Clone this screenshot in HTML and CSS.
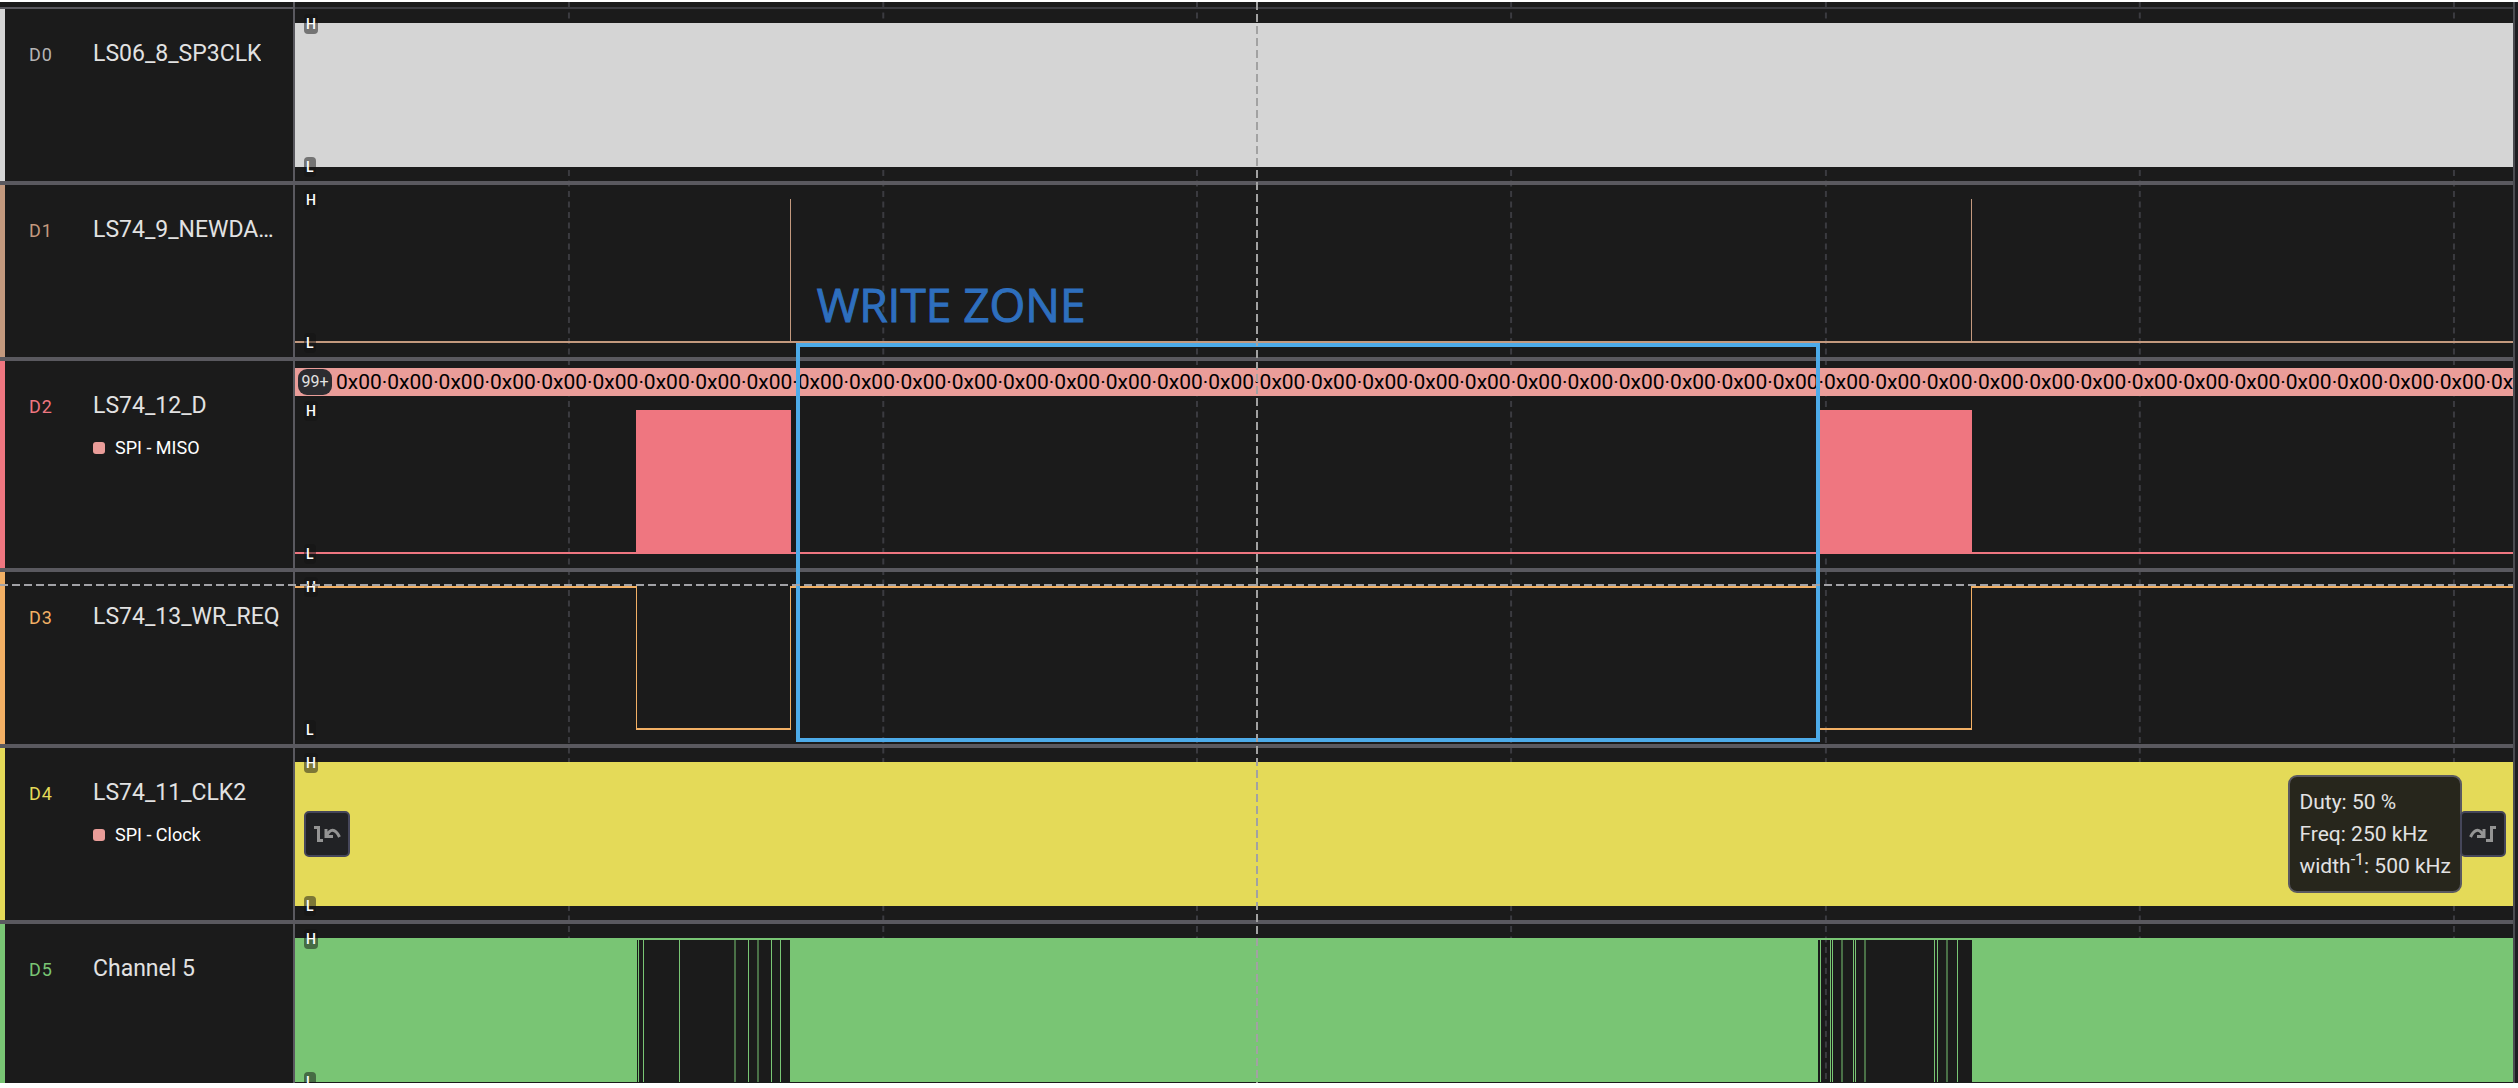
FILE: index.html
```
<!DOCTYPE html>
<html lang="en">
<head>
    <meta charset="utf-8">
    <title>Logic Analyzer</title>
    <link rel="stylesheet" href="styles.css">
</head>
<body>
<main class="analyzer">
    <!-- time grid, sits behind the channels -->
    <svg class="grid" aria-hidden="true">
        <line x1="12.34%" x2="12.34%" y1="0" y2="100%"/>
        <line x1="26.5%" x2="26.5%" y1="0" y2="100%"/>
        <line x1="40.63%" x2="40.63%" y1="0" y2="100%"/>
        <line x1="54.78%" x2="54.78%" y1="0" y2="100%"/>
        <line x1="68.96%" x2="68.96%" y1="0" y2="100%"/>
        <line x1="83.1%" x2="83.1%" y1="0" y2="100%"/>
        <line x1="97.25%" x2="97.25%" y1="0" y2="100%"/>
    </svg>

    <div class="ruler"><div class="ruler-side"></div></div>

    <section class="channel d0">
        <div class="label">
            <span class="id">D0</span>
            <span class="name">LS06_8_SP3CLK</span>
        </div>
        <div class="lane">
            <div class="signal">
                <svg class="wave" viewBox="0 0 2220 144" preserveAspectRatio="none">
                    <rect x="0" y="0" width="2220" height="144"/>
                </svg>
                <div class="levels"><span>H</span><span>L</span></div>
            </div>
        </div>
    </section>

    <section class="channel d1">
        <div class="label">
            <span class="id">D1</span>
            <span class="name">LS74_9_NEWDA…</span>
        </div>
        <div class="lane">
            <div class="signal">
                <svg class="wave" viewBox="0 0 2220 144" preserveAspectRatio="none">
                    <rect x="0" y="142" width="2220" height="2"/>
                    <rect x="495" y="0" width="1" height="142"/>
                    <rect x="1676" y="0" width="1" height="142"/>
                </svg>
                <div class="levels"><span>H</span><span>L</span></div>
            </div>
        </div>
    </section>

    <section class="channel d2">
        <div class="label">
            <span class="id">D2</span>
            <div class="names">
                <span class="name">LS74_12_D</span>
                <span class="decoder">SPI - MISO</span>
            </div>
        </div>
        <div class="lane">
            <div class="frames">
                <span class="count">99+</span>
                <span class="bytes">0x00·0x00·0x00·0x00·0x00·0x00·0x00·0x00·0x00·0x00·0x00·0x00·0x00·0x00·0x00·0x00·0x00·0x00·0x00·0x00·0x00·0x00·0x00·0x00·0x00·0x00·0x00·0x00·0x00·0x00·0x00·0x00·0x00·0x00·0x00·0x00·0x00·0x00·0x00·0x00·0x00·0x00·0x</span>
            </div>
            <div class="signal">
                <svg class="wave" viewBox="0 0 2220 144" preserveAspectRatio="none">
                    <rect x="0" y="142" width="2220" height="2"/>
                    <rect x="341" y="0" width="155" height="144"/>
                    <rect x="1523" y="0" width="154" height="144"/>
                </svg>
                <div class="levels"><span>H</span><span>L</span></div>
            </div>
        </div>
    </section>

    <section class="channel d3">
        <div class="label">
            <span class="id">D3</span>
            <span class="name">LS74_13_WR_REQ</span>
        </div>
        <div class="lane">
            <div class="signal">
                <svg class="wave" viewBox="0 0 2220 144" preserveAspectRatio="none">
                    <rect x="0" y="0" width="342" height="2"/>
                    <rect x="341" y="0" width="1" height="144"/>
                    <rect x="341" y="142" width="155" height="2"/>
                    <rect x="495" y="0" width="1" height="144"/>
                    <rect x="495" y="0" width="1028" height="2"/>
                    <rect x="1522" y="0" width="1" height="144"/>
                    <rect x="1522" y="142" width="155" height="2"/>
                    <rect x="1676" y="0" width="1" height="144"/>
                    <rect x="1676" y="0" width="544" height="2"/>
                </svg>
                <div class="levels"><span>H</span><span>L</span></div>
            </div>
        </div>
    </section>

    <section class="channel d4">
        <div class="label">
            <span class="id">D4</span>
            <div class="names">
                <span class="name">LS74_11_CLK2</span>
                <span class="decoder">SPI - Clock</span>
            </div>
        </div>
        <div class="lane">
            <div class="signal">
                <svg class="wave" viewBox="0 0 2220 144" preserveAspectRatio="none">
                    <rect x="0" y="0" width="2220" height="144"/>
                </svg>
                <div class="levels"><span>H</span><span>L</span></div>
                <div class="controls">
                    <button class="edge" type="button" aria-label="Previous edge">
                        <svg width="28" height="16" viewBox="0 0 28 16">
                            <path d="M1 1.5H5.5V14.5H10"/>
                            <path d="M13 3V10.5H20M13.5 10C17 2.5 22 2 26.5 11"/>
                        </svg>
                    </button>
                    <div class="measure">
                        <span>Duty: 50 %</span>
                        <span>Freq: 250 kHz</span>
                        <span>width<sup>-1</sup>: 500 kHz</span>
                    </div>
                    <button class="edge next" type="button" aria-label="Next edge">
                        <svg width="28" height="16" viewBox="0 0 28 16">
                            <path d="M27 1.5H22.5V14.5H17"/>
                            <path d="M15 3V10.5H8M14.5 10C11 2.5 6 2 1.5 11"/>
                        </svg>
                    </button>
                </div>
            </div>
        </div>
    </section>

    <section class="channel d5">
        <div class="label">
            <span class="id">D5</span>
            <span class="name">Channel 5</span>
        </div>
        <div class="lane">
            <div class="signal">
                <svg class="wave" viewBox="0 0 2220 144" preserveAspectRatio="none">
                    <rect x="0" y="0" width="2220" height="2"/>
                    <rect x="0" y="0" width="342" height="144"/>
                    <rect x="495" y="0" width="1028" height="144"/>
                    <rect x="1677" y="0" width="543" height="144"/>
                    <!-- first burst -->
                    <rect x="343" y="0" width="1" height="144"/>
                    <rect x="348" y="0" width="1" height="144"/>
                    <rect x="384" y="0" width="1" height="144"/>
                    <rect class="dim" x="439" y="0" width="2" height="144"/>
                    <rect x="453" y="0" width="1" height="144"/>
                    <rect class="dim" x="462" y="0" width="2" height="144"/>
                    <rect x="476" y="0" width="1" height="144"/>
                    <rect x="485" y="0" width="1" height="144"/>
                    <!-- second burst -->
                    <rect x="1525" y="0" width="1" height="144"/>
                    <rect x="1535" y="0" width="1" height="144"/>
                    <rect x="1537" y="0" width="1" height="144"/>
                    <rect class="dim" x="1546" y="0" width="2" height="144"/>
                    <rect x="1558" y="0" width="1" height="144"/>
                    <rect x="1560" y="0" width="1" height="144"/>
                    <rect class="dim" x="1569" y="0" width="2" height="144"/>
                    <rect x="1639" y="0" width="1" height="144"/>
                    <rect x="1642" y="0" width="1" height="144"/>
                    <rect class="dim" x="1651" y="0" width="2" height="144"/>
                    <rect x="1662" y="0" width="1" height="144"/>
                </svg>
                <div class="levels"><span>H</span><span>L</span></div>
            </div>
        </div>
    </section>

    <!-- annotation and crosshair over the lanes -->
    <div class="overlay">
        <div class="zone-title">WRITE ZONE</div>
        <div class="zone"></div>
        <div class="cursor-x"></div>
    </div>
    <div class="cursor-y"></div>
</main>
</body>
</html>
```
FILE: styles.css
```
*{
    box-sizing: border-box;
}
body{
    margin: 0;
    padding-top: 2px;
    background: #fff;
    color: #e2e2e2;
    font-family: Roboto, sans-serif;
}
.analyzer{
    position: relative;
    z-index: 0;
    display: grid;
    grid-template-rows: 7px 176px 176px 211px 176px 176px 159px;
    overflow: hidden;
    padding-right: 3px;
    background: #1b1b1b;
}
.analyzer::after{
    content: "";
    position: absolute;
    top: 0;
    bottom: 0;
    right: 0;
    width: 3px;
    background: #1e1e22;
    border-left: 2px solid #4b4b50;
}
.grid{
    position: absolute;
    z-index: -1;
    left: 295px;
    width: calc(100% - 298px);
    height: 100%;
}
.grid line{
    stroke: #3b3b40;
    stroke-width: 2px;
    stroke-dasharray: 6 4.5;
}
.ruler{
    border-bottom: 2px solid #3c3c41;
}
.ruler-side{
    width: 295px;
    height: 7px;
    border-right: 2px solid #5a595f;
    border-bottom: 2px solid #5a595f;
}

/* channels */
.channel{
    display: flex;
    min-width: 0;
    border-bottom: 4px solid #5a595f;
}
.d0{ --color: #d5d5d5; }
.d1{ --color: #c3997e; }
.d2{ --color: #ef7680; }
.d3{ --color: #f2b065; }
.d4{ --color: #e4da58; }
.d5{ --color: #79c574; border-bottom: 0; }
.label{
    display: flex;
    align-items: baseline;
    flex: 0 0 295px;
    padding: 31px 8px 0 24px;
    border-left: 5px solid var(--color);
    border-right: 2px solid #5a595f;
}
.id{
    flex: 0 0 64px;
    color: var(--color);
    font-size: 18px;
    letter-spacing: 1px;
}
.d0 .id{
    color: #b5b5b5;
}
.names{
    display: flex;
    flex-direction: column;
    gap: 16px;
}
.name{
    overflow: hidden;
    font-size: 23px;
    line-height: 28px;
    text-overflow: ellipsis;
    white-space: nowrap;
}
.decoder{
    display: flex;
    align-items: center;
    gap: 10px;
    color: #fff;
    font-size: 18px;
    line-height: 24px;
}
.decoder::before{
    content: "";
    width: 12px;
    height: 12px;
    border-radius: 3px;
    background: #ea9d99;
}

/* lanes */
.lane{
    flex: 1;
    min-width: 0;
    padding-top: 14px;
}
.d2 .lane{
    padding-top: 7px;
}
.frames{
    display: flex;
    align-items: center;
    gap: 4px;
    overflow: hidden;
    height: 28px;
    margin-bottom: 14px;
    padding-left: 3px;
    background: #ea9d99;
}
.count{
    flex: none;
    width: 34px;
    border-radius: 9px;
    background: #2c2c30;
    font-size: 16px;
    line-height: 26px;
    text-align: center;
}
.bytes{
    color: #000;
    font-size: 21px;
    line-height: 28px;
    white-space: nowrap;
}
.signal{
    position: relative;
    height: 144px;
}
.wave{
    display: block;
    width: 100%;
    height: 144px;
    fill: var(--color);
    shape-rendering: crispEdges;
}
.dim{
    opacity: .5;
}
.levels{
    position: absolute;
    top: -9px;
    bottom: -10px;
    left: 9px;
    display: flex;
    flex-direction: column;
    align-items: flex-start;
    justify-content: space-between;
}
.levels span{
    padding: 0 2px;
    border-radius: 4px;
    background: rgba(20, 20, 20, .5);
    color: #fff;
    font-size: 14px;
    font-weight: 500;
    line-height: 20px;
}
.controls{
    position: absolute;
    top: 0;
    bottom: 0;
    left: 9px;
    right: 9px;
    display: flex;
    align-items: center;
}
.edge{
    display: flex;
    align-items: center;
    justify-content: center;
    width: 46px;
    height: 46px;
    padding: 0;
    border: 2px solid #45465a;
    border-radius: 5px;
    background: #212225;
}
.edge svg{
    fill: none;
    stroke: #949494;
    stroke-width: 3px;
}
.measure{
    display: flex;
    flex-direction: column;
    margin-left: auto;
    padding: 9px;
    border: 2px solid #5a5960;
    border-radius: 9px;
    background: #27261c;
    font-size: 21px;
    line-height: 32px;
}
.measure sup{
    font-size: 16px;
    line-height: 0;
}
.next{
    margin-left: -2px;
}

/* annotation and crosshair */
.overlay{
    position: absolute;
    top: 0;
    bottom: 0;
    left: 295px;
    right: 3px;
    pointer-events: none;
}
.zone{
    position: absolute;
    top: 341px;
    left: 22.57%;
    width: 46.13%;
    height: 399px;
    border: 4px solid #4dabe9;
}
.zone-title{
    position: absolute;
    top: 270px;
    left: 23.5%;
    color: #2e6fbe;
    font-family: "Open Sans", sans-serif;
    font-size: 46px;
    line-height: 64px;
    white-space: nowrap;
    -webkit-text-stroke: 1px #2e6fbe;
}
.cursor-x{
    position: absolute;
    top: 0;
    bottom: 0;
    left: 43.3%;
    width: 2px;
    background: repeating-linear-gradient(#a2a2a2 0 8px, transparent 8px 12px);
}
.cursor-y{
    position: absolute;
    top: 582px;
    left: 0;
    right: 3px;
    height: 2px;
    background: repeating-linear-gradient(90deg, #a2a2a6 0 8px, transparent 8px 12px);
}
```
